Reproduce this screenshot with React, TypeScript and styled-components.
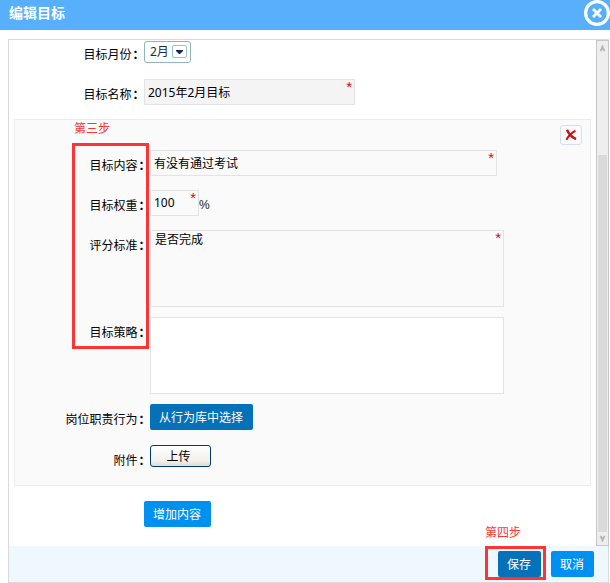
import React from 'react';
import styled, { createGlobalStyle } from 'styled-components';

const GlobalStyle = createGlobalStyle`
  * { box-sizing: border-box; }
  body {
    margin: 0;
    background: #fff;
    color: #000;
    font: 12px/16px 'Noto Sans CJK SC', sans-serif;
    overflow: hidden;
  }
  button, input, textarea { font: inherit; color: inherit; }
`;

const Dialog = styled.div`
  width: 610px;
  height: 583px;
  display: flex;
  flex-direction: column;
`;

const TitleBar = styled.header`
  height: 30px;
  flex: none;
  display: flex;
  justify-content: space-between;
  align-items: flex-start;
  background: #58b0fc;
  padding-left: 9px;
`;

const Title = styled.h1`
  margin: 0;
  padding-top: 2px;
  font-size: 14px;
  line-height: 20px;
  font-weight: 700;
  color: #fff;
`;

const CloseButton = styled.button`
  width: 26px;
  height: 26px;
  padding: 0;
  border: 0;
  background: none;
  svg { display: block; }
`;

const Frame = styled.div`
  width: 601px;
  height: 544px;
  margin: 9px 0 0 8px;
  border: 1px solid #d9d9d9;
  display: flex;
  flex-direction: column;
`;

const Viewport = styled.div`
  height: 506px;
  flex: none;
  display: flex;
`;

const Content = styled.main`
  flex: 1;
  padding: 1px 5px 0;
`;

const Scrollbar = styled.div`
  width: 13px;
  margin-right: -1px;
  padding: 0 1px;
  border: 1px solid #c6c6c6;
  background: #eee;
  display: flex;
  flex-direction: column;
`;

const Arrow = styled.svg`
  display: block;
  width: 9px;
  height: 12px;
  flex: none;
`;

const Track = styled.div`
  flex: 1;
  padding: 102px 0 1px;
`;

const Thumb = styled.div`
  height: 377px;
  background: #dadada;
`;

const Row = styled.div<{ $top?: number }>`
  display: flex;
  align-items: flex-start;
  margin-top: ${(p) => p.$top ?? 0}px;
`;

const Label = styled.label<{ $width: number; $offset: number }>`
  width: ${(p) => p.$width}px;
  flex: none;
  padding-top: ${(p) => p.$offset}px;
  text-align: right;
  white-space: nowrap;
`;

const Colon = styled.span`
  display: inline-block;
  width: 12.5px;
  padding-left: 1px;
  text-align: left;
  font-weight: 700;
`;

const Select = styled.div`
  width: 47px;
  height: 22px;
  padding: 0 3px 1px 5px;
  display: flex;
  align-items: center;
  justify-content: space-between;
  border: 1px solid #93b4bd;
  border-radius: 3px;
  color: #142c55;
  font-family: 'Noto Sans', 'Noto Sans CJK SC', sans-serif;
  line-height: 18px;
`;

const SelectArrow = styled.span`
  width: 15px;
  height: 13px;
  border: 1px solid #9fbfc8;
  border-radius: 2px;
  display: flex;
  align-items: center;
  justify-content: center;
`;

const FieldWrap = styled.div<{ $width: number }>`
  position: relative;
  width: ${(p) => p.$width}px;
`;

const Required = styled.span`
  position: absolute;
  top: 0;
  right: 3px;
  color: #e8000d;
  font: 15px/16px 'Liberation Sans', sans-serif;
`;

const Input = styled.input<{ $shaded?: boolean }>`
  display: block;
  width: 100%;
  height: 26px;
  padding: 0 3px 1px;
  border: 1px solid #e3e3e3;
  border-radius: 0;
  background: ${(p) => (p.$shaded ? '#f4f4f4' : '#fafafa')};
  font-family: 'Noto Sans', 'Noto Sans CJK SC', sans-serif;
`;

const TextArea = styled.textarea<{ $blank?: boolean }>`
  display: block;
  width: 100%;
  height: 77px;
  padding: 0 4px;
  border: 1px solid #e3e3e3;
  border-radius: 0;
  resize: none;
  background: ${(p) => (p.$blank ? '#fff' : '#fafafa')};
`;

const Percent = styled.span`
  padding-top: 7px;
  color: #222;
  font-family: 'Liberation Sans', sans-serif;
`;

const Panel = styled.section`
  position: relative;
  height: 367px;
  margin-top: 14px;
  border: 1px solid #ececec;
  background: #fafafa;
  padding-top: 30px;
`;

const DeleteButton = styled.button`
  position: absolute;
  top: 5px;
  right: 8px;
  width: 22px;
  height: 20px;
  padding: 0;
  border: 1px solid #d5e0e7;
  border-radius: 3px;
  background: #f8fcff;
  display: flex;
  align-items: center;
  justify-content: center;
`;

const Button = styled.button<{ $width: number; $dark?: boolean }>`
  width: ${(p) => p.$width}px;
  height: 26px;
  padding: 0 1px 0 0;
  border: 0;
  border-radius: 2px;
  background: ${(p) => (p.$dark ? '#0571b9' : '#0091f0')};
  color: #fff;
  white-space: nowrap;
`;

const UploadButton = styled.button`
  width: 61px;
  height: 22px;
  padding: 0 4px 1px 0;
  border: 1px solid #003c74;
  border-radius: 3px;
  background: linear-gradient(#fff, #f1f0ea 75%, #e0dcd0);
  line-height: 16px;
`;

const AddRow = styled.div`
  padding: 15px 0 0 130px;
`;

const Footer = styled.footer`
  flex: 1;
  display: flex;
  justify-content: flex-end;
  gap: 10px;
  padding: 5px 14px 0 0;
  background: #eff7ff;
`;

const Highlight = styled.div<{ $x: number; $y: number; $w: number; $h: number }>`
  position: absolute;
  left: ${(p) => p.$x}px;
  top: ${(p) => p.$y}px;
  width: ${(p) => p.$w}px;
  height: ${(p) => p.$h}px;
  border: 3px solid #fc3434;
  pointer-events: none;
`;

const StepNote = styled.div<{ $x: number; $y: number }>`
  position: absolute;
  left: ${(p) => p.$x}px;
  top: ${(p) => p.$y}px;
  color: #fc3434;
`;

function FieldLabel({ text, width = 135, offset = 7 }: { text: string; width?: number; offset?: number }) {
  return (
    <Label $width={width} $offset={offset}>
      {text}
      <Colon>：</Colon>
    </Label>
  );
}

export default function App() {
  return (
    <>
      <GlobalStyle />
      <Dialog>
        <TitleBar>
          <Title>编辑目标</Title>
          <CloseButton aria-label="关闭">
            <svg width="26" height="26" viewBox="0 0 26 26" fill="none" stroke="#fff">
              <circle cx="13" cy="13" r="11.4" strokeWidth="3.2" />
              <path d="M9 9l8 8M17 9l-8 8" strokeWidth="2.8" />
            </svg>
          </CloseButton>
        </TitleBar>
        <Frame>
          <Viewport>
            <Content>
              <Row>
                <FieldLabel text="目标月份" width={130} offset={5} />
                <Select>
                  2月
                  <SelectArrow>
                    <svg width="7" height="4" viewBox="0 0 7 4">
                      <path d="M0 0h7v1L3.5 4.5 0 1z" fill="#142c55" />
                    </svg>
                  </SelectArrow>
                </Select>
              </Row>
              <Row $top={16}>
                <FieldLabel text="目标名称" width={130} />
                <FieldWrap $width={211}>
                  <Input $shaded defaultValue="2015年2月目标" />
                  <Required>*</Required>
                </FieldWrap>
              </Row>
              <Panel>
                <DeleteButton aria-label="删除">
                  <svg width="12" height="12" viewBox="0 0 12 12" fill="none" stroke="#d01010">
                    <path d="M2 .8C3.4 4.4 7 8.3 11 10.2" strokeWidth="2.4" />
                    <path d="M10.4 1.6C6.5 3.8 3.2 7.4 1.4 10.8" strokeWidth="2.2" />
                  </svg>
                </DeleteButton>
                <Row>
                  <FieldLabel text="目标内容" />
                  <FieldWrap $width={347}>
                    <Input defaultValue="有没有通过考试" />
                    <Required>*</Required>
                  </FieldWrap>
                </Row>
                <Row $top={14}>
                  <FieldLabel text="目标权重" />
                  <FieldWrap $width={49}>
                    <Input defaultValue="100" />
                    <Required>*</Required>
                  </FieldWrap>
                  <Percent>%</Percent>
                </Row>
                <Row $top={14}>
                  <FieldLabel text="评分标准" />
                  <FieldWrap $width={354}>
                    <TextArea defaultValue="是否完成" />
                    <Required>*</Required>
                  </FieldWrap>
                </Row>
                <Row $top={10}>
                  <FieldLabel text="目标策略" />
                  <FieldWrap $width={354}>
                    <TextArea $blank />
                  </FieldWrap>
                </Row>
                <Row $top={10}>
                  <FieldLabel text="岗位职责行为" />
                  <Button $width={103} $dark>从行为库中选择</Button>
                </Row>
                <Row $top={15}>
                  <FieldLabel text="附件" />
                  <UploadButton>上传</UploadButton>
                </Row>
              </Panel>
              <AddRow>
                <Button $width={67}>增加内容</Button>
              </AddRow>
            </Content>
            <Scrollbar>
              <Arrow viewBox="0 0 9 12">
                <path d="M4.5 4L7 10H5.8L4.5 8.4 3.2 10H2z" fill="#b5b5b5" stroke="#b5b5b5" strokeWidth=".6" />
              </Arrow>
              <Track>
                <Thumb />
              </Track>
              <Arrow viewBox="0 0 9 12">
                <path d="M4.5 9L7 3H5.8L4.5 4.6 3.2 3H2z" fill="#b5b5b5" stroke="#b5b5b5" strokeWidth=".6" />
              </Arrow>
            </Scrollbar>
          </Viewport>
          <Footer>
            <Button $width={43} $dark>保存</Button>
            <Button $width={43}>取消</Button>
          </Footer>
        </Frame>
      </Dialog>
      <StepNote $x={74} $y={120}>第三步</StepNote>
      <Highlight $x={72} $y={143} $w={77} $h={206} />
      <StepNote $x={485} $y={524}>第四步</StepNote>
      <Highlight $x={485} $y={546} $w={61} $h={34} />
    </>
  );
}
